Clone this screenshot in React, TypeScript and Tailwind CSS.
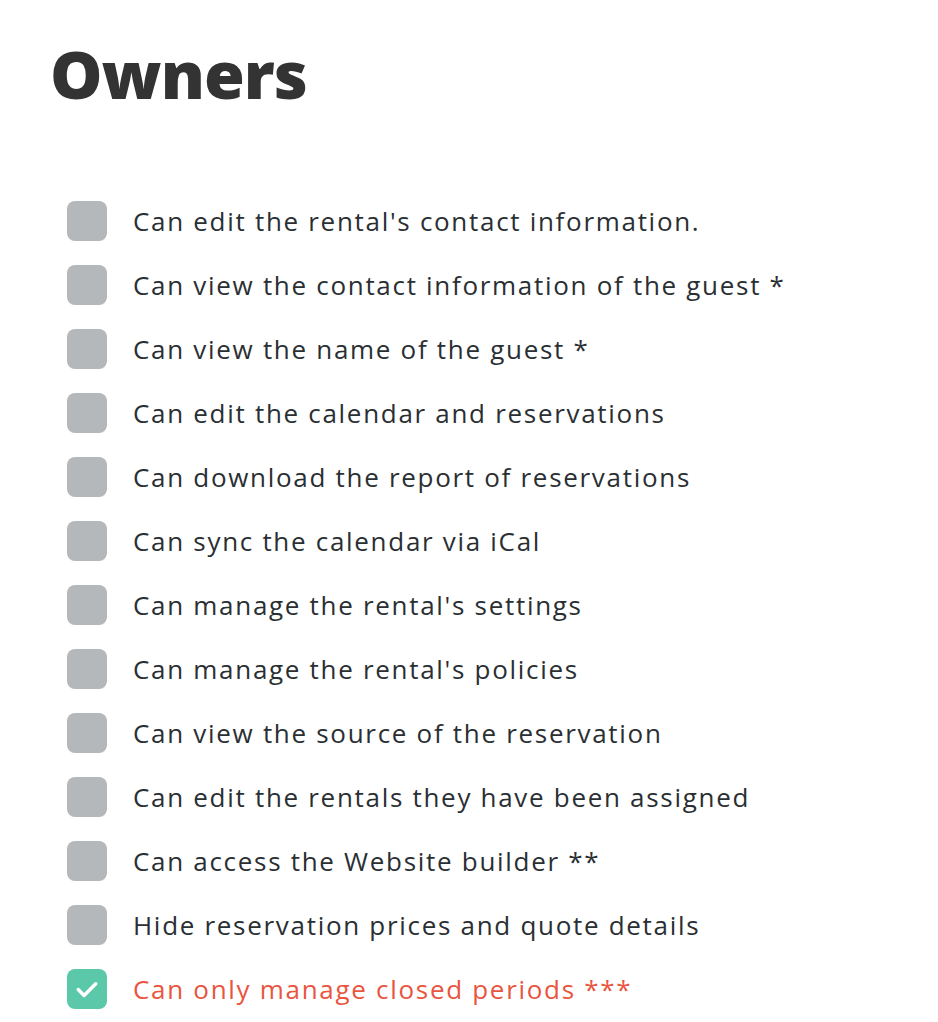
const items = [
  "Can edit the rental's contact information.",
  "Can view the contact information of the guest *",
  "Can view the name of the guest *",
  "Can edit the calendar and reservations",
  "Can download the report of reservations",
  "Can sync the calendar via iCal",
  "Can manage the rental's settings",
  "Can manage the rental's policies",
  "Can view the source of the reservation",
  "Can edit the rentals they have been assigned",
  "Can access the Website builder **",
  "Hide reservation prices and quote details",
];

function Checkbox({ checked }: { checked?: boolean }) {
  return (
    <div
      className={
        "flex h-10 w-10 shrink-0 items-center justify-center rounded-lg " +
        (checked ? "bg-[#5bc8a9]" : "bg-[#b4b8bb]")
      }
    >
      {checked && (
        <svg className="h-7 w-7" viewBox="0 0 24 24" fill="none">
          <path
            d="M4.5 12.5l5 5L19.5 7.5"
            stroke="white"
            strokeWidth="3"
            strokeLinecap="round"
            strokeLinejoin="round"
          />
        </svg>
      )}
    </div>
  );
}

export default function App() {
  return (
    <div className="min-h-screen bg-white px-[50px] pt-[40px] font-['Open_Sans',sans-serif]">
      <h1 className="text-[66px] font-extrabold leading-none tracking-[-1px] text-[#333333]">
        Owners
      </h1>
      <ul className="mt-[83px] ml-[17px] flex flex-col">
        {items.map((t) => (
          <li key={t} className="flex h-16 items-center gap-[26px]">
            <Checkbox />
            <span className="text-[26px] tracking-[1.7px] text-[#2a2f33]">{t}</span>
          </li>
        ))}
        <li className="flex h-16 items-center gap-[26px]">
          <Checkbox checked />
          <span className="text-[26px] tracking-[1.7px] text-[#e9553f]">
            Can only manage closed periods ***
          </span>
        </li>
      </ul>
    </div>
  );
}
